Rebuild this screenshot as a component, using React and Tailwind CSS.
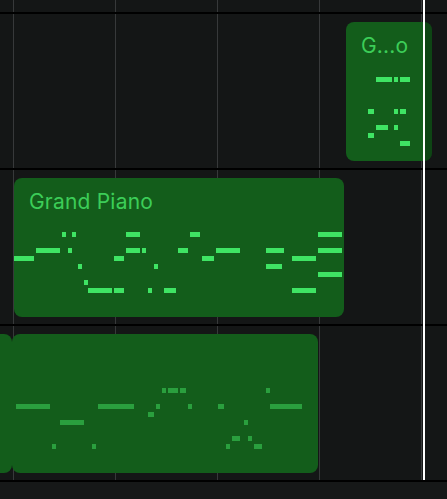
import React from "react";

// note rows are in page pixels, each note: [x, width]
const GRID_X = [13, 115, 217, 319, 421];

const REGIONS = [
  {
    key: "r1",
    track: 0,
    left: 346,
    width: 86,
    title: "G...o",
    bright: true,
    notes: [
      [77, [[376, 16], [394, 4], [400, 10]]],
      [109, [[368, 6], [394, 4], [400, 6]]],
      [125, [[376, 12], [394, 4]]],
      [133, [[368, 6]]],
      [141, [[400, 10]]],
    ],
    top: 22,
  },
  {
    key: "r2",
    track: 1,
    left: 14,
    width: 330,
    title: "Grand Piano",
    bright: true,
    top: 178,
    notes: [
      [232, [[62, 4], [72, 4], [126, 14], [190, 10], [318, 24]]],
      [248, [[36, 24], [68, 4], [126, 14], [142, 4], [178, 10], [216, 24], [266, 18], [318, 24]]],
      [256, [[14, 20], [114, 10], [202, 12], [292, 24]]],
      [264, [[78, 4], [154, 4], [266, 16]]],
      [272, [[318, 24]]],
      [280, [[84, 4]]],
      [288, [[88, 24], [114, 10], [148, 4], [164, 12], [292, 24]]],
    ],
  },
  {
    key: "r3",
    track: 2,
    left: 12,
    width: 306,
    title: "",
    bright: false,
    top: 334,
    notes: [
      [388, [[162, 4], [168, 10], [180, 6], [266, 4]]],
      [404, [[16, 34], [98, 36], [156, 4], [188, 4], [218, 6], [270, 32]]],
      [412, [[148, 6]]],
      [420, [[60, 24], [244, 4]]],
      [436, [[232, 8], [248, 4]]],
      [444, [[52, 4], [92, 4], [226, 4], [254, 8]]],
    ],
  },
];

function Region({ region }) {
  const { left, width, top, title, bright, notes } = region;
  return (
    <div
      className="absolute top-[8px] h-[139px] rounded-lg bg-[#135d1b] overflow-hidden"
      style={{ left, width }}
    >
      <svg className="absolute inset-0" width={width} height={139}>
        {notes.map(([y, row]) =>
          row.map(([x, w]) => (
            <rect
              key={`${y}-${x}`}
              x={x - left}
              y={y - top}
              width={w}
              height={5}
              fill={bright ? "#3fe464" : "#2a9f3e"}
            />
          ))
        )}
      </svg>
      {title && (
        <div className="relative pl-[15px] pt-[11px] text-[21px] leading-[26px] tracking-[0.2px] text-[#3ccd58] font-['Inter','Liberation_Sans',sans-serif]">
          {title}
        </div>
      )}
      {region.key === "r1" && (
        <div className="absolute right-0 top-0 bottom-0 w-[7px] bg-black/25" />
      )}
    </div>
  );
}

export default function App() {
  const tracks = [0, 1, 2];
  return (
    <div className="relative w-[447px] h-[499px] overflow-hidden bg-[#141616] flex flex-col">
      {/* bar grid */}
      <div className="absolute left-0 top-0 w-full h-[480px]">
        {GRID_X.map((x) => (
          <div key={x} className="absolute top-0 bottom-0 w-px bg-[#37393a]" style={{ left: x }} />
        ))}
      </div>

      <div className="h-[12px] shrink-0" />
      {tracks.map((t) => (
        <div key={t} className="relative h-[156px] shrink-0 border-t-2 border-black">
          {t === 2 && (
            <div className="absolute left-[-12px] top-[8px] w-[24px] h-[139px] rounded-lg bg-[#135d1b]" />
          )}
          {REGIONS.filter((r) => r.track === t).map((r) => (
            <Region key={r.key} region={r} />
          ))}
        </div>
      ))}
      <div className="relative flex-1 border-t-2 border-black bg-[#161818]" />

      {/* playhead */}
      <div className="absolute left-[423px] top-0 h-[480px] w-[2px] bg-white" />
    </div>
  );
}
